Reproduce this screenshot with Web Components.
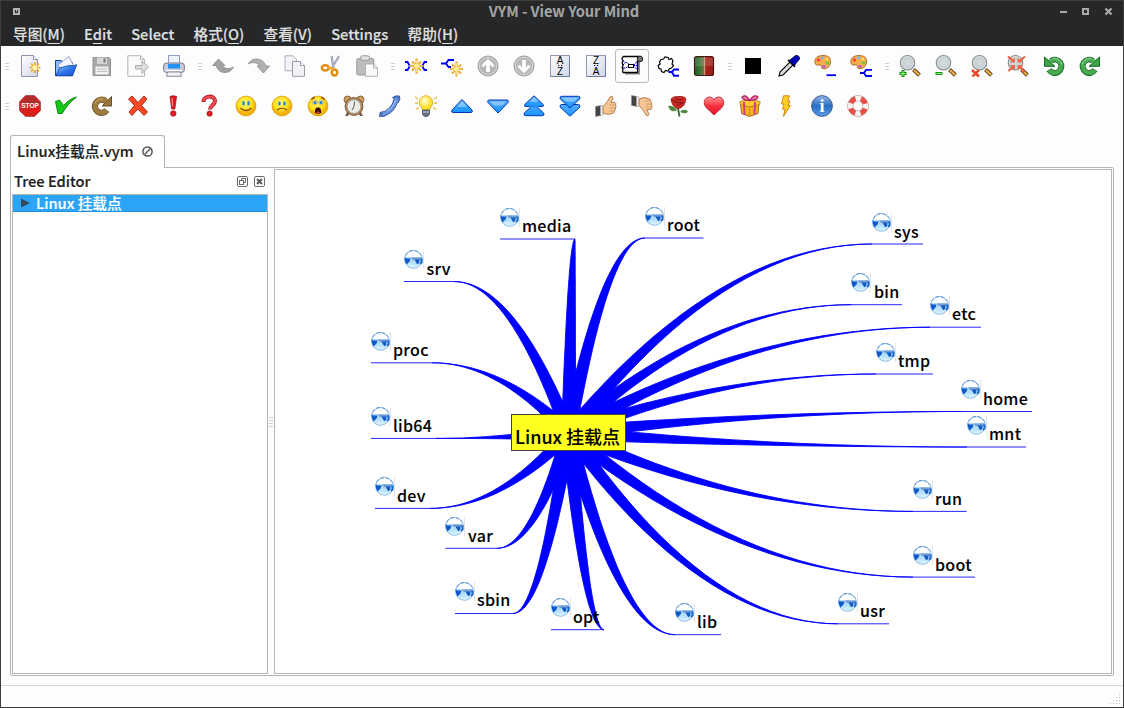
<!DOCTYPE html>
<html lang="zh-CN">
<head>
<meta charset="utf-8">
<title>VYM - View Your Mind</title>
<style>
html,body{margin:0;height:100%;overflow:hidden}
body{font-family:"Noto Sans CJK SC","Noto Sans",sans-serif;font-weight:500;font-size:14.67px;-webkit-text-stroke:.18px currentColor;background:#fdfdfd}
</style>
</head>
<body>
<vym-window></vym-window>
<script>
const ICONS={
new:`<path d="M2.500.5h12l4 4v17h-16z" fill="url(#pg)" stroke="#8f94a8"/><path d="M14.500.5v4h4" fill="#fff" stroke="#8f94a8"/><g stroke="#f3a12c" stroke-width="1.600"><path d="M16 7v11M10.500 12.500h11M12 8.500l8 8M20 8.500l-8 8"/></g><circle cx="16" cy="12.500" r="2.600" fill="#fff3a0"/>`,
open:`<path d="M.5 5.500h6l1 2h10v13h-17z" fill="#8cb8f8" stroke="#123fa5"/><path d="M3 10l11-8.500 5 10-12 6z" fill="#f4f6ff" stroke="#8791b5" stroke-width=".8"/><path d="M.8 20.800L5 12.500c4 0 6-1.500 8.500-1.800 3-.4 5 .5 8.200-1L17.500 20.800z" fill="url(#fold)" stroke="#123fa5" stroke-width=".9"/>`,
save:`<path d="M2 2.500h16l1.500 1.500v16.500H2z" fill="#a8a8a8" stroke="#8f8f8f"/><path d="M6 2.500h10v6.500H6z" fill="#d4d4d4"/><path d="M12.500 3.500h2v4h-2z" fill="#777"/><path d="M4.500 11.500h13v8h-13z" fill="#f1f1f1"/><path d="M6 14h10M6 16.500h10" stroke="#bdbdbd"/>`,
export:`<path d="M.8.700h12.700l4 4v16.600H.8z" fill="#fbfbfb" stroke="#b5b5b5"/><path d="M13.500.7v4h4" fill="none" stroke="#b5b5b5"/><path d="M8.500 10.500h6.500V6l6.500 6-6.500 6.500v-4.500H8.500z" fill="#dedede" stroke="#aaa"/>`,
print:`<path d="M5.500.5h11v10h-11z" fill="#eef3ff" stroke="#8c9ac0"/><rect x=".6" y="8" width="20.800" height="9.500" rx="3" fill="#c8cbd8" stroke="#777c8f"/><path d="M5 9h12v4.500H5z" fill="#2492f5"/><path d="M2.500 15.500h17" stroke="#fff"/><path d="M4.500 17h13l1 4.300h-15z" fill="#f2f2f4" stroke="#888ca0"/>`,
undo:`<path d="M6.500 4L.5 10.500h3.800C5 15 9 17.800 13.500 17.500c4-.4 6.500-2.500 8-5.500-2.500 1.500-5 2-7.500 1.300-2-.6-3-1.500-3.300-2.800H13z" fill="#a2a2a2" stroke="#868686" stroke-width=".8"/>`,
redo:`<path d="M15.500 18L21.500 11h-3.700C16.500 6.500 12.500 4 8 4 4.500 4.200 1.500 6 .5 9c2.500-1.500 5-1.800 7.500-1 2 .6 3 1.500 3.300 3H9z" fill="#b0b0b0" stroke="#868686" stroke-width=".8"/>`,
copy:`<path d="M1 .8h8l3.500 3.500v11.500H1z" fill="#f3f3f7" stroke="#aeb0bc"/><path d="M8.500 6.500h8l4 4v10.800h-12z" fill="#f3f3f7" stroke="#9a9ca9"/><path d="M16.500 6.500v4h4" fill="#fff" stroke="#9a9ca9"/>`,
cut:`<path d="M11.500 1l2 12M19 1l-7.500 13" stroke="#7a8199" stroke-width="2"/><path d="M11.500 1l2 11M19 1l-6.500 12" stroke="#d6dbe6" stroke-width=".8"/><ellipse cx="5.300" cy="12.800" rx="3.500" ry="2.600" fill="none" stroke="#e08d0e" stroke-width="2.500"/><ellipse cx="14.500" cy="17.500" rx="2.800" ry="3" fill="none" stroke="#e08d0e" stroke-width="2.500"/><path d="M8 11.500l5 3" stroke="#f6ae28" stroke-width="2.500"/>`,
paste:`<rect x=".8" y="3.500" width="17" height="16.500" rx="1.500" fill="#bcbcbc" stroke="#999"/><rect x="4.500" y=".8" width="9" height="4.500" rx="2" fill="#e2e2e2" stroke="#999"/><path d="M9.500 9h8l4 4v8.300h-12z" fill="#fbfbfb" stroke="#b0b0b0"/><path d="M17.500 9v4h4" fill="none" stroke="#b0b0b0"/>`,
add:`<path d="M0 7h2.500l2 3.500M0 15h2.500l2-3.500M22 7h-2.500l-2 3.500M22 15h-2.500l-2-3.500" fill="none" stroke="#0000f0" stroke-width="1.800"/><path d="M11.500 3.500v15M5 11h13M7 6.500l9 9M16 6.500l-9 9" stroke="#e3a02b" stroke-width="2"/><path d="M11.500 5v12M6.500 11h10M8 7.500l7 7M15 7.500l-7 7" stroke="#ffe17b" stroke-width="1"/><circle cx="11.500" cy="11" r="2.500" fill="#ffeb9a"/>`,
insert:`<path d="M0 8.500h5l2.500-3.500H13M5 8.500l2.500 3.500H10" fill="none" stroke="#0000f0" stroke-width="1.900"/><path d="M15.500 6.500v15M9 14h13M11 9.500l9 9M20 9.500l-9 9" stroke="#e3a02b" stroke-width="2"/><path d="M15.500 8v12M10.500 14h10M12 10.500l7 7M19 10.500l-7 7" stroke="#ffe17b" stroke-width="1"/><circle cx="15.500" cy="14" r="2.500" fill="#ffeb9a"/>`,
mup:`<circle cx="11" cy="11" r="10" fill="#b8b8b8" stroke="#9c9c9c"/><circle cx="11" cy="11" r="8.800" fill="none" stroke="#d8d8d8"/><path d="M11 3.700L4.500 10.200l2 2 2.700-2.700V17h3.600V9.500l2.700 2.700 2-2z" fill="#fff"/>`,
mdown:`<circle cx="11" cy="11" r="10" fill="#b8b8b8" stroke="#9c9c9c"/><circle cx="11" cy="11" r="8.800" fill="none" stroke="#d8d8d8"/><path d="M11 18.300l-6.500-6.500 2-2 2.700 2.700V5h3.600v7.500l2.700-2.700 2 2z" fill="#fff"/>`,
az:`<rect x="1.500" y=".5" width="19" height="21" fill="url(#pg)" stroke="#9298ad"/><path d="M2.500 21.500h18V2" fill="none" stroke="#6d7aa0"/><text x="11" y="9" class="g">A</text><path d="M9 10.500h1.200M12 10.500h1.200" stroke="#000"/><text x="11" y="20" class="g">Z</text>`,
za:`<rect x="1.500" y=".5" width="19" height="21" fill="url(#pg)" stroke="#9298ad"/><path d="M2.500 21.500h18V2" fill="none" stroke="#6d7aa0"/><text x="11" y="9" class="g">Z</text><path d="M9 10.500h1.200M12 10.500h1.200" stroke="#000"/><text x="11" y="20" class="g">A</text>`,
scroll:`<path d="M4 4h15v15.500H4z" fill="#888"/><path d="M2.500 1.500h15.500q-2 2-1.500 4.500v11.500H2q-1-1.500 0-3l-.8-2 .8-2-.8-2.500L2 6Q0 3 2.500 1.500z" fill="#fff" stroke="#000" stroke-width="1.300"/><path d="M2 5.500l2.500 2L2 10M4.500 7.500q3 0 4 3M2 13h2.500L8 11M16 6.500l-3.500 4H16M12.500 11l3.500 3.500" fill="none" stroke="#0000e5" stroke-dasharray="2 .6"/><rect x="7.500" y="9.500" width="5" height="3" fill="#fff" stroke="#000"/><circle cx="19" cy="4" r="2.800" fill="#777" stroke="#222"/>`,
cloud:`<path d="M4 4.500l2.500-.5L8 2l3 .5 1 2 2.500-1L16 6l-1 3 1.500 1.500-2 2.500-2 .5-1.500 2.500-2.500-.5L7 17.500l-2.500-1-.5-2.500-2-.5-.8-3 2-1.500L2.500 7z" fill="#fff" stroke="#000" stroke-width="1.200"/><path d="M11.500 17h3.500l2-2.500h5M15 17l2 3.700h5" fill="none" stroke="#0000f0" stroke-width="1.900"/>`,
redgreen:`<defs><linearGradient id="rg"><stop offset="0" stop-color="#185c26"/><stop offset=".3" stop-color="#3a7434"/><stop offset=".5" stop-color="#806e45"/><stop offset=".6" stop-color="#a8251a"/><stop offset="1" stop-color="#9b1a14"/></linearGradient></defs><rect x="1.500" y="1.500" width="19" height="19" rx="2" fill="url(#rg)" stroke="#4a1717" stroke-width="1.200"/><path d="M2 3h18v8q-9-1-18 1z" fill="#fff" opacity=".15"/><path d="M11.500 2v18" stroke="#d6b291" stroke-width=".8"/>`,
black:`<path d="M3 3h16v16H3z" fill="#000"/>`,
pick:`<path d="M1 21l1-4L13 6l3 3L5 20z" fill="#ddd" stroke="#000" stroke-width="1.100"/><path d="M10.500 5.500l2-1 5-4c3-.5 4.500 1.500 4 3.500l-4 5-1 2z" fill="#0000b8" stroke="#000034" stroke-width=".8"/><path d="M10 5l7 7" stroke="#001" stroke-width="1.500"/>`,
pal:`<path d="M1 8C0 3 4 .5 9 .5s8 2 7.500 6.500c-.3 5-4 7.500-8 6.500-2.300-.7.500-3.600-2.500-3.500C3 10 1.500 10.500 1 8z" fill="#f6ad4d" stroke="#9c5815" stroke-width=".8"/><circle cx="4.500" cy="5" r="1.700" fill="#fc443c"/><circle cx="8.500" cy="2.700" r="1.500" fill="#6bb6ff"/><circle cx="13" cy="4" r="1.500" fill="#fae454"/><circle cx="13.500" cy="8" r="1.700" fill="#67cb3c"/><circle cx="10" cy="11.500" r="1.600" fill="#c34edc"/>`,
zoom:`<path d="M14.500 14.500l6 5.700" stroke="#5c3d14" stroke-width="4"/><path d="M15 15l5.200 5" stroke="#f0b04c" stroke-width="2.200"/><circle cx="8.500" cy="7.700" r="7.200" fill="url(#lens)" stroke="#8a8f91" stroke-width="1.200"/>`,
rotl:`<g transform="matrix(-1 0 0 1 22 0)"><use href="#rr"/></g>`,rotr:`<use href="#rr"/>`,
stop:`<path d="M6.500.7h9l5.800 6v9l-5.800 5.600h-9L.7 15.700v-9z" fill="#d8201b" stroke="#a83a3a" stroke-width="1"/><path d="M1.500 8l5.500-6.500h8l5.500 6.500z" fill="#8f3a3a" opacity=".55"/><text x="11" y="13.200" style="font:bold 6.500px 'Liberation Sans',sans-serif;fill:#fff;text-anchor:middle">STOP</text>`,
check:`<path d="M.5 6.500l4-1.500 4 5.500C12.500 6 16 3.500 21.500 2 15 7 10.500 12.500 7.200 18.500l-4.200 0z" fill="#14c914" stroke="#087a0b" stroke-width=".9"/>`,
cc:`<path d="M15.800 15.200A6.600 6.600 0 1 1 14.500 6" fill="none" stroke="#6b5024" stroke-width="6.200"/><path d="M20.500 1.500v9.500h-9.500z" fill="#98753a" stroke="#6b5024"/><path d="M15.600 15.600A6.600 6.600 0 1 1 15.500 6.500" fill="none" stroke="#9f7c40" stroke-width="4.800"/><path d="M4 8.500Q6.500 3.500 12 4" fill="none" stroke="#cbb07a"/>`,
cross:`<path d="M1.500 4l3.500-3 6 6.500 6-6.500 3 3-5.500 6.500 6 6.500-3.500 3.500-6-6.500-6 6.500L2 17l5.500-6.500z" fill="#f94a24" stroke="#ad1b0c" stroke-width=".9"/>`,
excl:`<path d="M7 1.500Q10 0 13.500 1.500L11.800 14H8.700z" fill="#e41a24" stroke="#9e1019" stroke-width=".8"/><circle cx="10.300" cy="18.500" r="2.700" fill="#e41a24" stroke="#9e1019" stroke-width=".8"/><path d="M9 3l.6 8" stroke="#fca4a4"/>`,
quest:`<path d="M4.500 7C4.500 0 16 0 16 6c0 4-5 4-5 8.500" fill="none" stroke="#b4121c" stroke-width="4"/><path d="M4.500 6.500C5 0 16 0 16 6c0 4-5 4-5 8" fill="none" stroke="#f34b55" stroke-width="2.300"/><circle cx="10.600" cy="18.600" r="2.600" fill="#e41a24" stroke="#9e1019" stroke-width=".8"/>`,
smile:`<use href="#face"/><path d="M5.500 13q5.500 5 11 0" fill="none" stroke="#8d4b00" stroke-width="1.200"/><path d="M8.500 7v2.500M13.500 7v2.500" stroke="#1a82dc" stroke-width="2.200" stroke-linecap="round"/>`,
sad:`<use href="#face"/><path d="M6 15q5-3.500 10 0" fill="none" stroke="#8d4b00" stroke-width="1.200"/><path d="M8.500 7.500v2M13.500 7.500v2" stroke="#1a82dc" stroke-width="2.200" stroke-linecap="round"/>`,
wow:`<use href="#face"/><path d="M4.500 4.500q1.500-2 3.500-2M17.500 4.500q-1.500-2-3.500-2" stroke="#8d4b00" stroke-width="1.300" fill="none"/><circle cx="7.800" cy="7.500" r="2.500" fill="#fff6b0" stroke="#c18e12" stroke-width=".6"/><circle cx="14.200" cy="7.500" r="2.500" fill="#fff6b0" stroke="#c18e12" stroke-width=".6"/><circle cx="8" cy="7.500" r="1.600" fill="#1a82dc"/><circle cx="14" cy="7.500" r="1.600" fill="#1a82dc"/><path d="M8 18q-.5-5.500 3-5.700 3.500.2 3 5.700-3 1.500-6 0z" fill="#3c0506"/><path d="M9 18q2-3.500 4 0z" fill="#ef3a32"/>`,
alarm:`<path d="M4 17l-2 4h3l2-3M18 17l2 4h-3l-2-3" fill="#735f55"/><circle cx="4.500" cy="4.500" r="3.500" fill="#c89f63" stroke="#846238"/><circle cx="17.500" cy="4.500" r="3.500" fill="#c89f63" stroke="#846238"/><circle cx="11" cy="11.500" r="8.900" fill="#c08e58" stroke="#795438"/><circle cx="11" cy="11.500" r="6.900" fill="#ecedeb" stroke="#8b8b88" stroke-width=".8"/><path d="M11.500 6.500l-.5 5-2 3.500" fill="none" stroke="#555"/>`,
phone:`<path d="M2 19.500Q14 17.500 17.500 3.500" fill="none" stroke="#2c529f" stroke-width="5"/><path d="M13.500 2.500q3-2.500 7-1.500 1.500 3-1.500 7zM.5 21.500l.5-4 6-1-.5 4.500z" fill="#5379c6" stroke="#2c529f" stroke-width=".8"/><path d="M3.500 19Q14 17 17.800 3.500" fill="none" stroke="#6a93e0" stroke-width="3.400"/><path d="M8 16.300Q14 13 16.500 5" fill="none" stroke="#a9c6f8" stroke-width="1"/>`,
bulb:`<path d="M0 2l3 2M22 2l-3 2M0 8h3M22 8h-3M1 14.500l3-2M21 14.500l-3-2" stroke="#ecb93c" stroke-width="1.300"/><path d="M7.500 15q0-2-2.300-4C2.500 5 7 .7 11 .7S19.500 5 16.800 11Q14.500 13 14.500 15z" fill="url(#bu)" stroke="#d4a400" stroke-width=".8"/><path d="M7.500 15h7v4.500l-2 2h-3l-2-2z" fill="#667083" stroke="#343d50" stroke-width=".6"/><path d="M8 17h6" stroke="#c8ced7"/>`,
up:`<path d="M11 4.500L21 15q1 2.500-1 2.500H2Q0 17.500 1 15z" fill="url(#bl)" stroke="#0537b5" stroke-linejoin="round"/><path d="M11 6l5 5.500q-5 1-10 0z" fill="#fff" opacity=".35"/>`,
down:`<path d="M11 18L1 7.500Q0 5 2 5h18q2 0 1 2.500z" fill="url(#bl)" stroke="#0537b5" stroke-linejoin="round"/><path d="M3 6.500h16l-3.500 3.500q-4.500 1-9 0z" fill="#fff" opacity=".35"/>`,
up2:`<path d="M11 9l9.700 9q1 2.700-1.200 2.700H2.500Q.3 20.700 1.300 18z" fill="url(#bl)" stroke="#0537b5"/><path d="M11 .8l9.200 8.700q1 2-1 2h-16.400q-2 0-1-2z" fill="url(#bl)" stroke="#0537b5"/><path d="M6 11.500h10" stroke="#2a86f4" stroke-width="1.600"/><path d="M11 2l4.500 4.500q-4.500 1-9 0z" fill="#fff" opacity=".35"/>`,
down2:`<g transform="matrix(1 0 0 -1 0 22)"><path d="M11 9l9.700 9q1 2.700-1.200 2.700H2.500Q.3 20.700 1.300 18z" fill="url(#bl)" stroke="#0537b5" transform="matrix(1 0 0 -1 0 22.300) translate(0 .6)" visibility="hidden"/></g><path d="M1.300 9q-1-2 1-2.300L1.300 4Q.3 1.300 2.500 1.300h17q2.200 0 1.200 2.700L16.800 8H19q2.200.3 1.200 2.700L11 21.200 1.800 10.700Q.8 8.300 3 8h2.200L1.300 4" fill="url(#bl)" stroke="#0537b5" stroke-linejoin="round"/><path d="M3 2.700h16l-3.500 3.500q-4.500 1-9 0z" fill="#fff" opacity=".35"/><path d="M5.500 8.500L11 13.500l5.500-5" fill="none" stroke="#0537b5" stroke-width=".8"/>`,
tu:`<use href="#thumb"/>`,td:`<g transform="matrix(1 0 0 -1 0 22)"><use href="#thumb"/></g>`,
rose:`<path d="M11 13l1.500 8.500" stroke="#28682e" stroke-width="1.700"/><path d="M1 11q5-1 9 4-6 4-9-4zM13 17q3-4 8-1-1 4-8 1z" fill="#4c8b3f"/><path d="M4 4Q6 1 11 1.500q5-1 8 2-.5 3.500-2 6.500-3 4-7 3.500Q5 11.500 4 4z" fill="#cf2b22" stroke="#961a19" stroke-width=".8"/><path d="M5 5q5 4 12 2.500M8 3q4 3.500 8 1M9 10q4 1 7-3" fill="none" stroke="#86161a" stroke-width="1.100"/>`,
heart:`<path d="M11 20Q7.500 16.500 4 13.500C-2 7 3 1.500 7 2q3 .3 4 3 1-2.700 4-3c4-.5 9 5 3 11.500Q14.500 16.500 11 20z" fill="url(#he)" stroke="#bc252f" stroke-width=".9"/>`,
gift:`<path d="M1.500 8.500l9 3 9.500-3-1 10-8.500 3-8-3z" fill="#f3b41c" stroke="#9d4b08" stroke-width=".8"/><path d="M.8 6.500l9.700-2 10.700 2-.5 3-10.200 2.500-9.200-2.500z" fill="#ffcb30" stroke="#af6412" stroke-width=".7"/><path d="M10.500 12v9.500" stroke="#d99010"/><path d="M5 7l.5 13M16 7l-.5 13" stroke="#cf3f83" stroke-width="2"/><path d="M10 5.500Q3 5 3 2 7-1.500 10.700 5.500q4-7 8.300-3.500 0 3-8 3.500z" fill="#e078a6" stroke="#b31e5c" stroke-width="1.200"/>`,
flash:`<path d="M8.500.8h6L12.500 6H15l-2 4.500h2.500L8.500 21.300l1.500-7H7.500L9 9H6.500z" fill="#ffd222" stroke="#cc7c09" stroke-width=".9"/>`,
info:`<circle cx="11" cy="11" r="10.400" fill="url(#inf)" stroke="#3c609a"/><text x="11" y="17" style="font:bold 18px 'Liberation Serif',serif;fill:#fff;text-anchor:middle">i</text>`,
life:`<circle cx="11" cy="11" r="7.700" fill="none" stroke="#b5918e" stroke-width="6"/><circle cx="11" cy="11" r="7.700" fill="none" stroke="#f8f5f3" stroke-width="5"/><circle cx="11" cy="11" r="7.700" fill="none" stroke="#e64f48" stroke-width="5" stroke-dasharray="6.700 5.390" stroke-dashoffset="-2.700"/>`
};
ICONS.down2=`<path d="M11 21.200L1.300 12.300q-1-2.600 1.200-2.800h17q2.200.2 1.200 2.800z" fill="url(#bl)" stroke="#0537b5" stroke-linejoin="round"/><path d="M11 13L1.300 4Q.3 1.300 2.500 1.300h17q2.200 0 1.200 2.700z" fill="url(#bl)" stroke="#0537b5" stroke-linejoin="round"/><path d="M3 2.700h16l-3.500 3.500q-4.500 1-9 0z" fill="#fff" opacity=".35"/>`;
ICONS.palline=ICONS.pal+`<path d="M12.500 20.200h9.500" stroke="#0000f0" stroke-width="1.800"/>`;
ICONS.palsub=ICONS.pal+`<path d="M10 18h4l2-3.200h6M14 18l2 3h6" fill="none" stroke="#0000f0" stroke-width="1.800"/>`;
ICONS.zin=ICONS.zoom+`<path d="M4 15v7M.5 18.500h7" stroke="#119510" stroke-width="3"/><path d="M4 16v5M1.500 18.500h5" stroke="#a8f38b" stroke-width="1"/>`;
ICONS.zout=ICONS.zoom+`<path d="M.5 18.500h7" stroke="#119510" stroke-width="3"/><path d="M1.500 18.500h5" stroke="#a8f38b" stroke-width="1"/>`;
ICONS.zoff=ICONS.zoom+`<path d="M1 15l7 6.500M8 15l-6.500 6.500" stroke="#ed4521" stroke-width="2.400"/>`;
ICONS.zfit=ICONS.zoom+`<path d="M1 1.500l5.500 5M18 1.500L12 6.500M1.500 16L7 11M17.500 17l-5-5.500" fill="none" stroke="#ed5a3b" stroke-width="1.900"/><path d="M8 2.500v5H3zM10.500 2.500v5h5.500zM8 15.500v-5.500H3zM10.500 15.500V10H16z" fill="#f1694a"/>`;
const DEFS=`<defs>
<linearGradient id="pg" x2="1" y2="1"><stop stop-color="#fff"/><stop offset="1" stop-color="#cfd5e6"/></linearGradient>
<linearGradient id="fold" x2="1" y2="1"><stop stop-color="#b8dcff"/><stop offset=".5" stop-color="#2f78ea"/><stop offset="1" stop-color="#1a4ecb"/></linearGradient>
<linearGradient id="bl" x2="0" y2="1"><stop stop-color="#56adff"/><stop offset="1" stop-color="#1695ff"/></linearGradient>
<linearGradient id="he" x2="0" y2="1"><stop stop-color="#ff9292"/><stop offset=".5" stop-color="#f93240"/><stop offset="1" stop-color="#e80d28"/></linearGradient>
<radialGradient id="lens"><stop stop-color="#d4dddf"/><stop offset=".7" stop-color="#c7d0d2"/><stop offset="1" stop-color="#f1f4f4"/></radialGradient>
<radialGradient id="bu" cx=".4" cy=".35"><stop stop-color="#fffde0"/><stop offset="1" stop-color="#ffdf2a"/></radialGradient>
<linearGradient id="inf" x2="0" y2="1"><stop stop-color="#91b5e5"/><stop offset=".5" stop-color="#296dc0"/><stop offset="1" stop-color="#5b9de6"/></linearGradient>
<radialGradient id="fa" cx=".45" cy=".35"><stop stop-color="#fff673"/><stop offset=".7" stop-color="#ffe11c"/><stop offset="1" stop-color="#f2b40c"/></radialGradient>
<circle id="face" cx="11" cy="11" r="9.900" fill="url(#fa)" stroke="#dc9509" stroke-width=".8"/>
<g id="rr"><path d="M16 14.800A6.700 6.700 0 1 1 14 5.700" fill="none" stroke="#166b25" stroke-width="5.800"/><path d="M20.500 2v9.300h-10.500z" fill="#3fa34a" stroke="#166b25"/><path d="M15.800 15.200A6.700 6.700 0 1 1 15 6.300" fill="none" stroke="#48ab52" stroke-width="4.200"/><path d="M3 9.500Q5 3.500 12 3.500" stroke="#98da9b" fill="none"/></g>
<g id="thumb"><path d="M.5 11.500l5.500-1v10l-5.500 1z" fill="#444" stroke="#888" stroke-width=".6"/><path d="M5.500 10.500h2.500v9.500l-2.500 .6z" fill="#f4f4f4" stroke="#999" stroke-width=".5"/><path d="M8 11.500l4-4.500 3-5q2-2 3 .5l-2 5h4q1.500 1 .5 2.500 1 1.500 0 3 .5 1.500-1 3 0 2-2 2.500-4 2-9.500-.5z" fill="#f8c595" stroke="#a06b3d" stroke-width=".8"/><path d="M14.500 10h5M15 13h5M14.500 16h4" stroke="#c58f5e" stroke-width=".8"/></g>
</defs>`;

const define=(name,html)=>customElements.define(name,class extends HTMLElement{
  constructor(){super();this.attachShadow({mode:'open'})}
  connectedCallback(){this.shadowRoot.innerHTML=typeof html==='function'?html(this):html}
});

define('vym-icon',el=>`<style>:host{display:flex;width:22px;height:22px;flex:none;-webkit-text-stroke:0}svg{display:block;overflow:visible}.g{font:10px "Liberation Sans",sans-serif;text-anchor:middle;fill:#000}</style><svg width="22" height="22" viewBox="0 0 22 22">${DEFS}${ICONS[el.getAttribute('name')]||''}</svg>`);

define('tool-button',el=>`<style>:host{display:flex;box-sizing:border-box;width:36px;height:36px;align-items:center;justify-content:center}
:host([pressed]) .b{border:1px solid #b9b9b9;background:#fcfcfc}.b{box-sizing:border-box;width:34px;height:34px;border-radius:3px;display:flex;align-items:center;justify-content:center;border:1px solid transparent}</style><div class="b"><vym-icon name="${el.getAttribute('icon')}"></vym-icon></div>`);

define('tool-handle',`<style>:host{display:flex;flex-direction:column;box-sizing:border-box;width:13px;height:36px;padding-left:2px;gap:2px;align-items:center;justify-content:center}i{width:4px;height:1px;background:#cfcfcf}</style><i></i><i></i><i></i>`);

define('tool-row',el=>`<style>:host{display:flex;height:40px;align-items:center;margin-left:-2px}</style>${el.getAttribute('items').split(' ').map(n=>n==='|'?'<tool-handle></tool-handle>':n[0]==='*'?`<tool-button pressed icon="${n.slice(1)}"></tool-button>`:`<tool-button icon="${n}"></tool-button>`).join('')}`);

define('title-bar',`<style>:host{display:grid;grid-template-columns:60px 1fr 60px;align-items:start;height:22px;color:#a4a5a5;font-weight:700;line-height:20px;-webkit-text-stroke:0}
.t{text-align:center;padding-left:4px;letter-spacing:-.07px}svg{display:block;overflow:visible}.r{justify-self:end}</style>
<svg width="60" height="21"><path d="M13 8h5v5h-5z" fill="none" stroke="#b2b3b3" stroke-width="2"/><path d="M15 9h1v2h-1z" fill="#b2b3b3"/></svg>
<div class="t">VYM - View Your Mind</div>
<svg class="r" width="60" height="21"><path d="M-3 11h7" stroke="#a9aaaa" stroke-width="2"/><path d="M20 8h5v5h-5z" fill="none" stroke="#a9aaaa" stroke-width="2"/><path d="M42.500 7.500l6 6M48.500 7.500l-6 6" stroke="#a9aaaa" stroke-width="2.200"/></svg>`);

define('menu-bar',`<style>:host{display:flex;gap:19.200px;padding-left:12px;height:23px;line-height:22px;color:#dfdfdf}u{text-decoration:underline;text-decoration-thickness:1px;text-underline-offset:3px}</style>
<span>导图(<u>M</u>)</span><span>E<u>d</u>it</span><span>Select</span><span>格式(<u>O</u>)</span><span>查看(<u>V</u>)</span><span>Settings</span><span>帮助(<u>H</u>)</span>`);

define('doc-tab',`<style>:host{display:flex;box-sizing:border-box;width:155px;height:33px;border:1px solid #b4b4b4;border-bottom:0;border-radius:3px 3px 0 0;background:#fff;align-items:center;padding:0 0 1px 6px;gap:8.500px;color:#222;position:relative;z-index:1;margin-bottom:-1px}span{line-height:22px;margin-top:-1px}svg{display:block}</style>
<span><slot></slot></span><svg width="11" height="11"><circle cx="5.500" cy="5.500" r="4.600" fill="none" stroke="#555" stroke-width="1.500"/><path d="M2.500 8.500l6-6" stroke="#555" stroke-width="1.400"/></svg>`);

define('tree-dock',`<style>:host{display:flex;flex-direction:column;width:257px;color:#222}
.h{display:flex;height:25px;align-items:center;padding:0 3px 0 3px}.h span{flex:1;line-height:22px;margin-top:-2px}.h svg{display:block}
.l{flex:1;border:1px solid #b4b4b4;background:#fff;margin-left:1px}.s{box-sizing:border-box;height:17px;background:#2ca5f8;border-bottom:1px solid #2491e0;display:flex;align-items:center;color:#fff;line-height:17px;gap:6px;padding-left:8px;white-space:nowrap}.s span{margin-top:-1px}</style>
<div class="h"><span>Tree Editor</span><svg width="28" height="12"><g fill="none" stroke="#6c6c6c"><rect x=".5" y=".5" width="10" height="10" rx="1.500"/><path d="M4.500 4.500v-2h4v4h-2"/><rect x="2.500" y="4.500" width="4" height="4"/><rect x="17.500" y=".5" width="10" height="10" rx="1.500"/><path d="M20 3l5 5M25 3l-5 5" stroke="#555" stroke-width="1.900"/></g></svg></div>
<div class="l"><div class="s"><svg width="9" height="10"><path d="M0 .5v9l9-4.500z" fill="#314c60"/></svg><span>Linux 挂载点</span></div></div>`);

define('map-node',el=>`<style>:host{position:absolute;display:flex;color:#000;font-size:16px;line-height:20px;white-space:nowrap;pointer-events:none;height:31px;-webkit-text-stroke:.1px #000}
svg{display:block;flex:none}span{margin:calc(7.500px + var(--dy,0px)) 0 0 calc(2px + var(--dx,0px));letter-spacing:.28px}</style>
<svg width="20" height="20" viewBox="0 0 20 20"><defs><linearGradient id="w" x2="0" y2="1"><stop stop-color="#fff"/><stop offset=".36" stop-color="#fff"/><stop offset=".4" stop-color="#a5cff2"/><stop offset=".7" stop-color="#b5e2fb"/><stop offset="1" stop-color="#e6f8ff"/></linearGradient></defs><path d="M19.500 0v19" stroke="#e4e4e4"/><circle cx="9.500" cy="9.400" r="8.900" fill="url(#w)" stroke="#8abdec" stroke-width="1"/><path d="M1.500 5.500Q4 .5 9 .5T17.500 5.500" fill="none" stroke="#5a92d8" stroke-width="1" stroke-dasharray="4 1.500"/><path d="M.5 7l1.500 1.500h4.500l-1 3-3 3Q.3 11 .5 7z" fill="#0f58cb"/><path d="M7 7.500h10.500v2.500H9z" fill="#6f9cd2"/><path d="M10.500 9.500h5l-.3 3.500-2 1.300-1.200-2z" fill="#145ac4"/><path d="M16.300 8.500h2.200v4.500l-2.200 1.700-.7-1.700 1-1z" fill="#1e6bd0"/></svg><span><slot></slot></span>`);

/* Nodes: label, underline start, underline end, underline y, side the branch leaves from, label nudge x, label nudge y */
const NODES=[['media',500,575,239,-1,0,-1],['srv',404,454,281.5,-1,.6,0],['proc',371,432,362.8,-1,0,-1],['lib64',371,436,438.4,-1,0,0],['dev',375,430,508.4,-1,0,0],['var',445.5,497,548.3,-1,1,0],['sbin',455,513,613.5,-1,0,-1],['opt',551,604,629.7,-1,0,0],
['root',645,703.5,238,1,0,-1],['sys',872,923,244,1,0,0],['bin',851.5,902,304.700,1,1,0],['etc',930,981,327.2,1,0,-1],['tmp',876,933,374,1,0,-1],['home',961,1032,411.5,1,0,0],['mnt',967,1026,447,1,0,-1],['run',913,966.5,511.4,1,0,0],['boot',913,975,577.1,1,0,0],['usr',838,889,623.8,1,0,-1],['lib',675,721,634.7,1,0,0]];
define('mind-map',()=>{
  const OX=275,OY=170,CX=568.6,CY=433,T=7;let s='',n='';
  for(const [name,a,b,y,side,dx,dy] of NODES){
    const x=side<0?b:a,ang=Math.atan((CY-y)/(CX-x)),tx=Math.sin(ang)*T,ty=-Math.cos(ang)*T;
    const arc=(ex,ey)=>{const p=[];for(let i=0;i<=24;i++){const t=i/24;p.push((x+t*(ex-x)-OX).toFixed(1)+','+(y+t*t*(ey-y)-OY).toFixed(1))}return p};
    s+=`<polygon points="${arc(CX+tx,CY+ty).concat(arc(CX-tx,CY-ty).reverse()).join(' ')}" fill="#00f" stroke="#00f" stroke-width=".9"/><path d="M${a-OX} ${y-OY}H${b-OX}" stroke="#00f" stroke-opacity=".85"/>`;
    n+=`<map-node style="left:${Math.floor(a-OX)}px;top:${Math.floor(y-OY-30.75)}px;--dx:${dx}px;--dy:${dy}px">${name}</map-node>`;
  }
  return `<style>:host{display:block;position:relative;box-sizing:border-box;border:1px solid #b4b4b4;background:#fff;overflow:hidden}svg{display:block;position:absolute;left:0;top:0}
.c{position:absolute;left:236px;top:244px;box-sizing:border-box;width:115px;height:37px;border:1px solid #444;background:#ffff20;color:#000;font-size:18px;line-height:43px;text-align:center;padding-right:2px;white-space:nowrap;-webkit-text-stroke:.1px #000}</style>
<svg width="837" height="503">${s}</svg><div class="c">Linux 挂载点</div>${n}`;
});

define('status-bar',`<style>:host{display:flex;justify-content:flex-end;align-items:flex-end;box-sizing:border-box;height:22px;border-top:1px solid #d6d6d6;background:#fdfdfd}svg{display:block}</style>
<svg width="13" height="13"><g fill="#c4c4c4"><path d="M9 0h1v1H9zM6 3h1v1H6zM9 3h1v1H9zM3 6h1v1H3zM6 6h1v1H6zM9 6h1v1H9zM0 9h1v1H0zM3 9h1v1H3zM6 9h1v1H6zM9 9h1v1H9z"/></g></svg>`);

define('vym-window',`<style>:host{display:flex;flex-direction:column;box-sizing:border-box;width:1124px;height:708px;border:1px solid #3b3d3f;background:#fdfdfd}
header{background:#252729;height:45px;flex:none}
.tools{height:80px;padding:0;flex:none}
.work{flex:1;display:flex;flex-direction:column;padding:9px 9px 9px 9px}
.pane{flex:1;display:grid;grid-template-columns:257px 6px 1fr;border:1px solid #b4b4b4;border-radius:0 2px 2px 2px;background:#fff;padding:1px 1px 1px 0}
.split{background:#fdfdfd;display:flex;flex-direction:column;gap:2px;align-items:center;justify-content:center}.split i{width:4px;height:1px;background:#cfcfcf}
status-bar{flex:none}</style>
<header><title-bar></title-bar><menu-bar></menu-bar></header>
<div class="tools"><tool-row items="| new open save export print | undo redo copy cut paste | add insert mup mdown az za *scroll cloud redgreen | black pick palline palsub | zin zout zoff zfit rotl rotr"></tool-row>
<tool-row items="| stop check cc cross excl quest smile sad wow alarm phone bulb up down up2 down2 tu td rose heart gift flash info life"></tool-row></div>
<div class="work"><doc-tab>Linux挂载点.vym</doc-tab><div class="pane"><tree-dock></tree-dock><div class="split"><i></i><i></i><i></i><i></i></div><mind-map></mind-map></div></div>
<status-bar></status-bar>`);
</script>
</body>
</html>
